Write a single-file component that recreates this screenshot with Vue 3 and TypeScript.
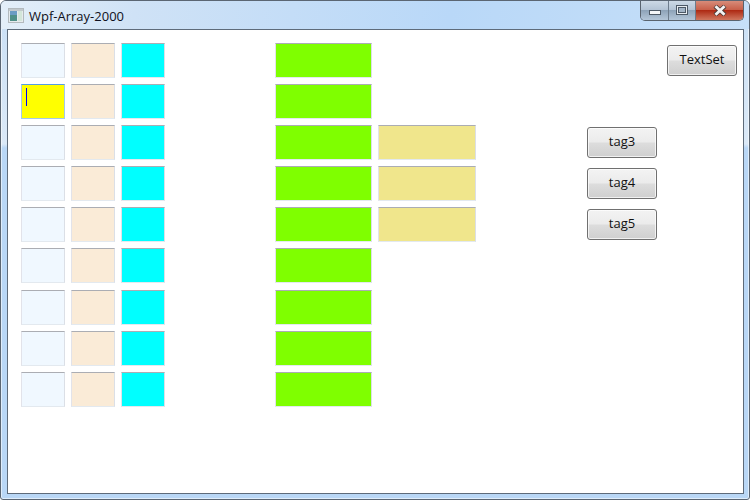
<script setup lang="ts">
const rows = [0, 1, 2, 3, 4, 5, 6, 7, 8]
const tags: Record<number, string> = { 2: 'tag3', 3: 'tag4', 4: 'tag5' }
</script>

<template>
  <div class="window">
    <header class="titlebar">
      <svg class="app-icon" width="16" height="15" viewBox="0 0 16 15" aria-hidden="true">
        <rect x="0.5" y="0.5" width="15" height="14" fill="#e6ebee" stroke="#b3babe" />
        <rect x="1" y="1" width="14" height="2" fill="#c2c9cd" />
        <rect x="2" y="3" width="7" height="10" fill="#4f9088" />
        <rect x="2" y="3" width="7" height="4" fill="#6a9cc4" />
        <rect x="10" y="3" width="4" height="10" fill="#d3e6da" />
      </svg>
      <span class="title">Wpf-Array-2000</span>
      <div class="caption">
        <div class="cap cap-min"><span class="min-glyph"></span></div>
        <div class="cap cap-max"><span class="max-glyph"></span></div>
        <div class="cap cap-close">
          <svg width="14" height="11" viewBox="0 0 14 11" aria-hidden="true">
            <path d="M2 1 L12 10 M12 1 L2 10" stroke="#4b3a38" stroke-width="4.4" fill="none" />
            <path d="M2.5 1.2 L11.5 9.8 M11.5 1.2 L2.5 9.8" stroke="#f4f4f4" stroke-width="2.8" fill="none" />
          </svg>
        </div>
      </div>
    </header>

    <main class="client">
      <div class="grid">
        <template v-for="r in rows" :key="r">
          <div class="box alice" :class="{ focused: r === 1 }">
            <span v-if="r === 1" class="caret"></span>
          </div>
          <div class="box linen"></div>
          <div class="box cyan"></div>
          <div></div>
          <div class="box lawn"></div>
          <div v-if="tags[r]" class="box khaki"></div>
          <div v-else></div>
          <div></div>
          <button v-if="tags[r]" class="btn">{{ tags[r] }}</button>
          <div v-else></div>
          <button v-if="r === 0" class="btn btn-set">TextSet</button>
          <div v-else></div>
        </template>
      </div>
    </main>
  </div>
</template>

<style scoped>
.window {
  box-sizing: border-box;
  width: 750px;
  height: 500px;
  display: flex;
  flex-direction: column;
  border: 1px solid #5b6673;
  border-radius: 6px 6px 3px 3px;
  background: linear-gradient(to bottom, #c9dff5 0, #dbe9f7 143px, #b9d7f6 147px, #b9d7f6 100%);
  box-shadow: inset 0 0 0 1px rgba(255, 255, 255, 0.55);
  font-family: "Open Sans", "Noto Sans", sans-serif;
  overflow: hidden;
}
.titlebar {
  height: 28px;
  display: flex;
  align-items: flex-start;
  flex: none;
  background: linear-gradient(100deg, #e4eff9 0, #cfe2f6 18%, #b9d8f8 60%, #c6dff8 100%);
}
.app-icon {
  margin: 7px 0 0 7px;
  flex: none;
}
.title {
  margin: 6px 0 0 5px;
  font-size: 13px;
  line-height: 18px;
  color: #101020;
}
.caption {
  margin-left: auto;
  margin-right: 5px;
  margin-top: -1px;
  display: flex;
  height: 20px;
  border: 1px solid #59636e;
  border-top: none;
  border-radius: 0 0 5px 5px;
  overflow: hidden;
}
.cap {
  display: flex;
  align-items: center;
  justify-content: center;
  height: 100%;
}
.cap-min, .cap-max {
  border-right: 1px solid #6d7c8c;
  background: linear-gradient(to bottom, #cfdbe7 0, #b3c3d4 50%, #8ea3b8 52%, #b4c6d8 100%);
}
.cap-min { width: 27px; }
.cap-max { width: 26px; }
.cap-close {
  width: 47px;
  background: linear-gradient(to bottom, #d9917f 0, #c8604a 48%, #ae2a14 52%, #d0775f 100%);
}
.min-glyph {
  width: 12px;
  height: 5px;
  margin-top: 5px;
  box-sizing: border-box;
  background: #f4f6f8;
  border: 1px solid #4d5966;
}
.max-glyph {
  width: 12px;
  height: 10px;
  box-sizing: border-box;
  border: 1px solid #4d5966;
  background: #a3b4c6;
  box-shadow: inset 0 0 0 1px #e8edf2, inset 0 0 0 2px #4d5966;
}
.client {
  flex: 1;
  margin: 0 5px 5px 6px;
  background: #fff;
  border: 1px solid #5e6b7a;
  padding: 13px 0 0 13px;
}
.grid {
  display: grid;
  grid-template-columns: 44px 44px 44px 98px 97px 98px 99px 70px 74px;
  grid-auto-rows: 35px;
  column-gap: 6px;
  row-gap: 6.09375px;
}
.box {
  box-sizing: border-box;
  border: 1px solid #e3e9ef;
  border-top-color: #abadb3;
  border-left-color: #e2e3ea;
  border-right-color: #dbdfe6;
}
.alice { background: #f0f8ff; }
.linen { background: #faebd7; }
.cyan { background: #00ffff; }
.lawn { background: #7fff00; }
.khaki { background: #f0e68c; }
.focused {
  background: #ffff00;
  border-color: #a4c9e8;
  border-top-color: #569de5;
  padding: 3px 0 0 4px;
}
.caret {
  display: block;
  width: 1px;
  height: 18px;
  background: #0000ff;
}
.btn {
  box-sizing: border-box;
  width: 70px;
  height: 31px;
  align-self: center;
  padding: 0 0 3px;
  font: 13px/1 "Open Sans", "Noto Sans", sans-serif;
  color: #111;
  border: 1px solid #707070;
  border-radius: 3px;
  background: linear-gradient(to bottom, #f3f3f3 0, #ebebeb 49%, #dddddd 51%, #cfcfcf 100%);
  box-shadow: inset 0 0 0 1px rgba(255, 255, 255, 0.7);
}
.btn-set {
  justify-self: end;
}
</style>

<style>
body { background: #fff; }
</style>
